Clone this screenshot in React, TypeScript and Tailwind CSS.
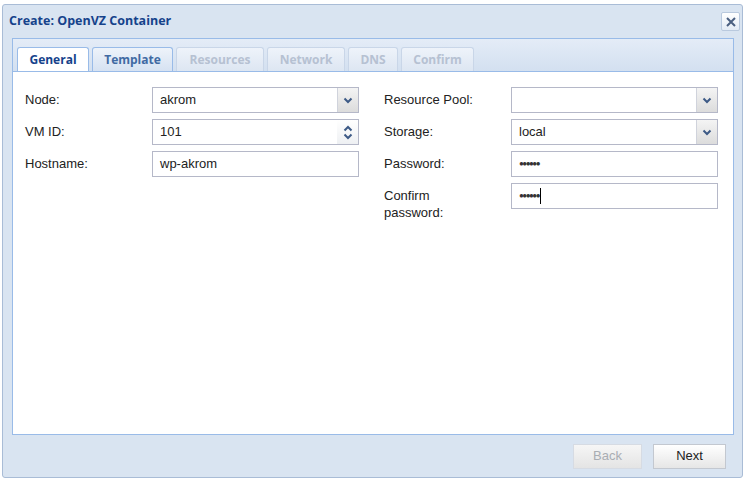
import React from "react";

const Chevron = () => (
  <svg width="10" height="7" viewBox="0 0 10 7">
    <path d="M1.5 1.5 L5 5 L8.5 1.5" fill="none" stroke="#3d5a86" strokeWidth="2" />
  </svg>
);
const ChevronUp = () => (
  <svg width="10" height="7" viewBox="0 0 10 7">
    <path d="M1.5 5.5 L5 2 L8.5 5.5" fill="none" stroke="#3d5a86" strokeWidth="2" />
  </svg>
);

function Combo({ value }: { value: string }) {
  return (
    <div className="flex h-[26px] w-[207px] border border-[#b5b8c8] bg-white">
      <div className="flex flex-1 items-center pl-[7px] text-[13px] text-[#222]">{value}</div>
      <div className="flex w-[21px] items-center justify-center border-l border-[#d0d3dc] bg-gradient-to-b from-[#f4f4f4] to-[#dcdcdc]">
        <Chevron />
      </div>
    </div>
  );
}

function Spinner({ value }: { value: string }) {
  return (
    <div className="flex h-[26px] w-[207px] border border-[#b5b8c8] bg-white">
      <div className="flex flex-1 items-center pl-[7px] text-[13px] text-[#222]">{value}</div>
      <div className="flex w-[21px] flex-col items-center justify-center gap-[1px] bg-gradient-to-b from-white to-[#eef0f3]">
        <ChevronUp />
        <Chevron />
      </div>
    </div>
  );
}

function Text({ value, pw, caret }: { value: string; pw?: boolean; caret?: boolean }) {
  return (
    <div className="flex h-[26px] w-[207px] items-center border border-[#b5b8c8] bg-white pl-[7px] text-[13px] text-[#222]">
      {pw ? (
        <span className="text-[8px] leading-none tracking-[-1.5px] text-[#333]">{value}</span>
      ) : (
        value
      )}
      {caret && <span className="ml-[1px] inline-block h-[16px] w-[1px] bg-black" />}
    </div>
  );
}

function Row({ label, children }: { label: React.ReactNode; children: React.ReactNode }) {
  return (
    <div className="flex items-start">
      <div className="w-[127px] pt-[4px] text-[13px] leading-[17px] text-[#222]">{label}</div>
      {children}
    </div>
  );
}

function Tab({ label, active, disabled, w }: { label: string; active?: boolean; disabled?: boolean; w: string }) {
  return (
    <div
      className={
        "flex h-[24px] items-center justify-center rounded-t-[3px] border border-b-0 text-[12px] font-bold " +
        w +
        " " +
        (active
          ? "border-[#99bbe8] bg-white text-[#15428b]"
          : disabled
          ? "border-[#c9d6e8] bg-gradient-to-b from-[#eef3fa] to-[#dde6f2] text-[#b6c1d2]"
          : "border-[#99bbe8] bg-gradient-to-b from-[#eef3fa] to-[#d6e2f2] text-[#416aa3]")
      }
    >
      {label}
    </div>
  );
}

export default function App() {
  return (
    <div className="h-[480px] w-[746px] bg-white" style={{ fontFamily: "'Liberation Sans', Arial, sans-serif" }}>
      <div className="h-[4px]" />
      <div className="ml-[2px] flex h-[474px] w-[741px] flex-col rounded-[3px] border border-[#a9bcd6] bg-[#d9e4f1]">
        {/* title */}
        <div className="flex h-[33px] items-center justify-between pl-[6px] pr-[2px]">
          <div className="text-[12.5px] font-bold text-[#15428b]" style={{ fontFamily: "'Open Sans', sans-serif" }}>
            Create: OpenVZ Container
          </div>
          <div className="flex h-[19px] w-[19px] items-center justify-center rounded-[2px] border border-[#b9c9de] bg-gradient-to-b from-white to-[#e3ebf5]">
            <svg width="12" height="12" viewBox="0 0 12 12">
              <path d="M2 2 L10 10 M10 2 L2 10" stroke="#4a5f80" strokeWidth="2" />
            </svg>
          </div>
        </div>
        {/* tab panel */}
        <div className="ml-[9px] mr-[8px] flex flex-col">
          <div
            className="flex h-[34px] items-end gap-[3px] border border-[#99bbe8] bg-gradient-to-b from-[#e4ecf7] to-[#d3e0f0] pl-[4px]"
            style={{ fontFamily: "'Open Sans', sans-serif" }}
          >
            <Tab label="General" active w="w-[72px]" />
            <Tab label="Template" w="w-[81px]" />
            <Tab label="Resources" disabled w="w-[88px]" />
            <Tab label="Network" disabled w="w-[78px]" />
            <Tab label="DNS" disabled w="w-[50px]" />
            <Tab label="Confirm" disabled w="w-[73px]" />
          </div>
          <div className="flex h-[363px] gap-[25px] border border-t-0 border-[#99bbe8] bg-white pl-[12px] pt-[15px]">
            <div className="flex flex-col gap-[6px]">
              <Row label="Node:">
                <Combo value="akrom" />
              </Row>
              <Row label="VM ID:">
                <Spinner value="101" />
              </Row>
              <Row label="Hostname:">
                <Text value="wp-akrom" />
              </Row>
            </div>
            <div className="flex flex-col gap-[6px]">
              <Row label="Resource Pool:">
                <Combo value="" />
              </Row>
              <Row label="Storage:">
                <Combo value="local" />
              </Row>
              <Row label="Password:">
                <Text value="●●●●●●" pw />
              </Row>
              <Row label={<>Confirm<br />password:</>}>
                <Text value="●●●●●●" pw caret />
              </Row>
            </div>
          </div>
        </div>
        {/* footer */}
        <div className="flex flex-1 items-center justify-end gap-[11px] pr-[16px]">
          <div className="flex h-[25px] w-[69px] items-center justify-center border border-[#d6dbe3] bg-gradient-to-b from-[#f6f6f6] to-[#e4e4e4] text-[13px] text-[#a9adb3]">
            Back
          </div>
          <div className="flex h-[25px] w-[73px] items-center justify-center border border-[#c3c8d0] bg-gradient-to-b from-white to-[#e6e6e6] text-[13px] text-[#222]">
            Next
          </div>
        </div>
      </div>
    </div>
  );
}
